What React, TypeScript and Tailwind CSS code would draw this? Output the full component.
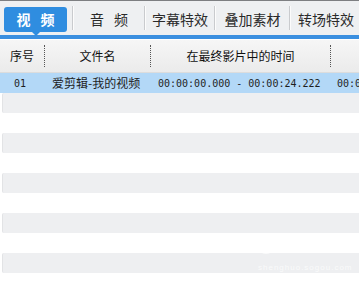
import React from 'react';

const tabs = ['音频', '字幕特效', '叠加素材', '转场特效'];
const tabWidths = ['w-[70px]', 'w-[68px]', 'w-[73px]', 'w-[70px]'];

const Sep: React.FC = () => (
  <div className="h-[24px] w-[2px] border-l border-[#c9cbce] bg-white/80 shrink-0" />
);

const mono = { fontFamily: '"DejaVu Sans Mono", "Liberation Mono", monospace' };

const App: React.FC = () => {
  const stripes = Array.from({ length: 10 }, (_, i) => i);

  return (
    <div
      className="relative w-[359px] h-[294px] overflow-hidden bg-white text-[#1e1e1e]"
      style={{ fontFamily: '"Noto Sans CJK SC", "Liberation Sans", sans-serif' }}
    >
      {/* tab bar */}
      <div className="h-[35px] bg-[#eef0f2] border-t border-[#7d7f82] flex items-center">
        <div className="relative shrink-0 ml-[4px] mr-[5px] mt-[3px] w-[63px] h-[25px] rounded-[3px] bg-[#2f8de0] flex items-center justify-center text-white text-[14px] font-bold tracking-[10px] pl-[10px]">
          视频
          <div className="absolute left-[28px] -bottom-[4px] w-0 h-0 border-l-[4px] border-r-[4px] border-t-[4px] border-l-transparent border-r-transparent border-t-[#2f8de0]" />
        </div>
        {tabs.map((t, i) => (
          <React.Fragment key={t}>
            <Sep />
            <div
              className={`${tabWidths[i]} shrink-0 mt-[3px] flex items-center justify-center text-[14px] text-[#2a2a2a] ${
                i === 0 ? 'tracking-[10px] pl-[10px]' : ''
              }`}
            >
              {t}
            </div>
          </React.Fragment>
        ))}
        <Sep />
      </div>

      {/* blue rule */}
      <div className="h-[4px] bg-[#3a8fe0]" />
      <div className="h-[1px] bg-white" />

      {/* header */}
      <div className="h-[33px] flex items-center bg-gradient-to-b from-[#f6f6f6] to-[#ebebeb] border-b border-[#dcdcdc] text-[12px] text-[#111]">
        <div className="w-[44px] shrink-0 text-center">序号</div>
        <div className="w-[1px] shrink-0 h-[22px] border-l border-dotted border-[#555]" />
        <div className="w-[105px] shrink-0 text-center">文件名</div>
        <div className="w-[1px] shrink-0 h-[22px] border-l border-dotted border-[#555]" />
        <div className="w-[179px] shrink-0 text-center">在最终影片中的时间</div>
        <div className="w-[1px] shrink-0 h-[22px] border-l border-dotted border-[#555]" />
      </div>

      {/* selected row */}
      <div className="h-[20px] flex items-center bg-[#b3d8f7] text-[12px] whitespace-nowrap overflow-hidden">
        <div className="w-[44px] shrink-0 pl-[14px] text-[10px]" style={mono}>
          01
        </div>
        <div className="w-[106px] shrink-0 pl-[8px]">爱剪辑-我的视频</div>
        <div className="w-[180px] shrink-0 pl-[8px] text-[10px]" style={mono}>
          00:00:00.000 - 00:00:24.222
        </div>
        <div className="shrink-0 pl-[7px] text-[10px]" style={mono}>
          00:0
        </div>
      </div>

      {/* striped empty rows */}
      {stripes.map(i => (
        <div
          key={i}
          className={`h-[20px] ${i % 2 === 0 ? 'bg-[#eeeff1] ml-[2px] border-l border-[#e2e3e5] rounded-l-[2px]' : 'bg-white'}`}
        />
      ))}

      {/* watermark */}
      <div className="absolute left-[258px] top-[236px] flex flex-col items-start text-white/70 pointer-events-none">
        <div className="flex items-center gap-[3px]">
          <div className="w-[16px] h-[16px] rounded-full border-2 border-white/70 text-[10px] font-bold leading-none flex items-center justify-center">
            S
          </div>
          <span className="text-[13px] tracking-[1px]">生活百科</span>
        </div>
        <span className="text-[8px] mt-[6px] tracking-[1px]" style={{ fontFamily: '"Liberation Sans", sans-serif' }}>
          shenghuo.sogou.com
        </span>
      </div>
    </div>
  );
};

export default App;
